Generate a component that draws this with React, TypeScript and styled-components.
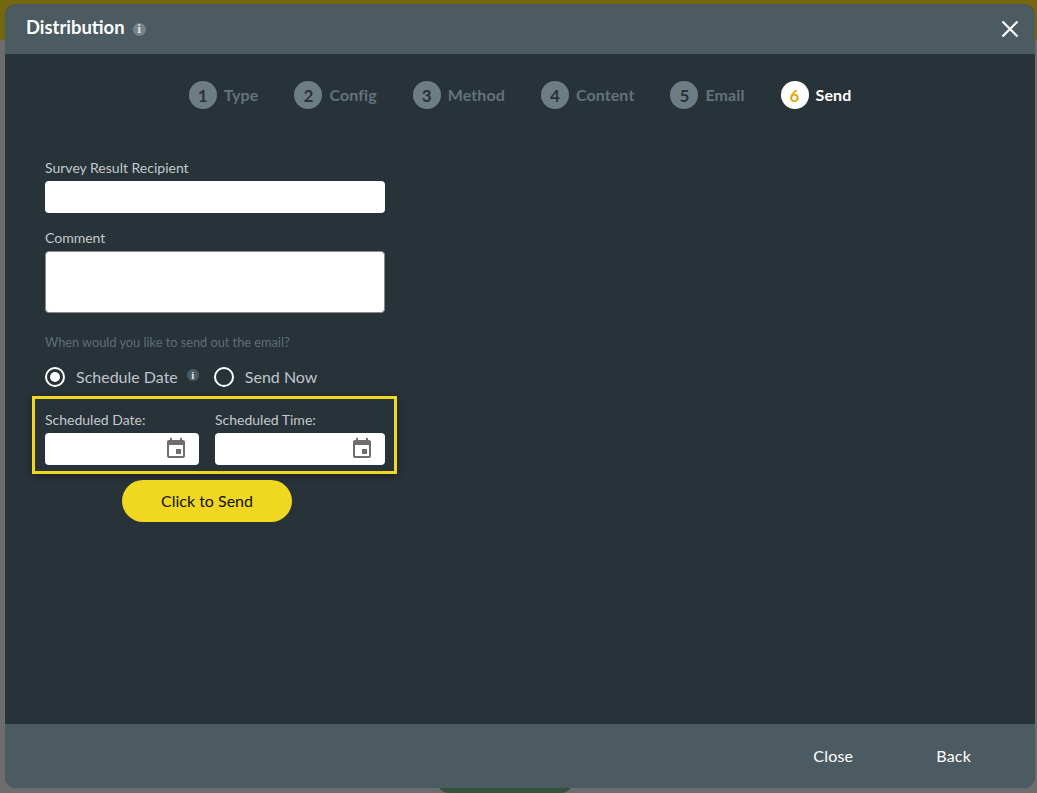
import { createGlobalStyle } from "styled-components";
import styled from "styled-components";

const steps = [
  { id: 1, name: "Type" },
  { id: 2, name: "Config" },
  { id: 3, name: "Method" },
  { id: 4, name: "Content" },
  { id: 5, name: "Email" },
  { id: 6, name: "Send", active: true },
];

const CalendarIcon = () => (
  <CalendarSvg viewBox="0 0 24 24" fill="currentColor">
    <path d="M17 12h-5v5h5v-5zM16 1v2H8V1H6v2H5c-1.11 0-1.99.9-1.99 2L3 19c0 1.1.89 2 2 2h14c1.1 0 2-.9 2-2V5c0-1.1-.9-2-2-2h-1V1h-2zm3 18H5V8h14v11z" />
  </CalendarSvg>
);

const App = () => {
  return (
    <Page>
      <GlobalStyle />
      <BackdropBar />
      <BackdropTab />
      <Modal>
        <Header>
          <Title>Distribution</Title>
          <HeaderInfo>i</HeaderInfo>
          <CloseIcon viewBox="0 0 18 18">
            <path d="M1.5 1.5 16.5 16.5M16.5 1.5 1.5 16.5" />
          </CloseIcon>
        </Header>
        <Body>
          <Steps>
            {steps.map((step) => (
              <Step key={step.id}>
                <StepNumber $active={step.active}>{step.id}</StepNumber>
                <StepName $active={step.active}>{step.name}</StepName>
              </Step>
            ))}
          </Steps>
          <Form>
            <Label>Survey Result Recipient</Label>
            <TextInput />
            <CommentLabel>Comment</CommentLabel>
            <CommentBox />
            <Question>When would you like to send out the email?</Question>
            <RadioRow>
              <RadioDot $checked />
              <RadioText>Schedule Date</RadioText>
              <RadioInfo>i</RadioInfo>
              <SendNowDot />
              <RadioText>Send Now</RadioText>
            </RadioRow>
            <Highlight>
              <DateField $width={154}>
                <Label>Scheduled Date:</Label>
                <DateInput>
                  <CalendarIcon />
                </DateInput>
              </DateField>
              <DateField $width={170}>
                <Label>Scheduled Time:</Label>
                <DateInput>
                  <CalendarIcon />
                </DateInput>
              </DateField>
            </Highlight>
            <SendButton>Click to Send</SendButton>
          </Form>
        </Body>
        <Footer>
          <FooterButton>Close</FooterButton>
          <FooterButton>Back</FooterButton>
        </Footer>
      </Modal>
    </Page>
  );
};

const GlobalStyle = createGlobalStyle`
  html, body {
    margin: 0;
    padding: 0;
    background: #6c6c6c;
    font-family: "Lato", "Liberation Sans", sans-serif;
  }
  * {
    box-sizing: border-box;
  }
`;

const Page = styled.div`
  position: relative;
  width: 1037px;
  height: 793px;
  padding: 4px 2px 5px 5px;
  overflow: hidden;
  background: #6c6c6c;
`;

const BackdropBar = styled.div`
  position: absolute;
  top: 0;
  left: 0;
  right: 0;
  height: 40px;
  background: #75670e;
`;

const BackdropTab = styled.div`
  position: absolute;
  left: 437px;
  bottom: 0;
  width: 136px;
  height: 12px;
  border-radius: 0 0 12px 12px / 0 0 12px 12px;
  background: #35523f;
`;

const Modal = styled.div`
  position: relative;
  display: flex;
  flex-direction: column;
  height: 100%;
  border-radius: 12px;
  overflow: hidden;
  background: #283239;
`;

const Header = styled.div`
  display: flex;
  align-items: center;
  height: 50px;
  flex-shrink: 0;
  padding: 0 16px 0 21px;
  background: #4c5b62;
`;

const Title = styled.div`
  position: relative;
  top: -2px;
  font-size: 18.4px;
  font-weight: 700;
  color: #fff;
`;

const HeaderInfo = styled.span`
  display: flex;
  align-items: center;
  justify-content: center;
  width: 13px;
  height: 13px;
  margin-left: 8px;
  border-radius: 50%;
  background: #76848a;
  color: #e4e8e9;
  font-family: "Liberation Serif", serif;
  font-size: 12px;
  font-weight: 700;
`;

const CloseIcon = styled.svg`
  width: 18px;
  height: 18px;
  margin-left: auto;
  fill: none;
  stroke: #fff;
  stroke-width: 2.2;
`;

const Body = styled.div`
  flex: 1;
  padding: 0 0 0 40px;
`;

const Steps = styled.div`
  display: flex;
  justify-content: center;
  gap: 36px;
  padding: 27px 40px 0 0;
`;

const Step = styled.div`
  display: flex;
  align-items: center;
  gap: 7px;
  height: 28px;
`;

const StepNumber = styled.span<{ $active?: boolean }>`
  display: flex;
  align-items: center;
  justify-content: center;
  width: 28px;
  height: 28px;
  border-radius: 50%;
  font-size: 17px;
  font-weight: 700;
  background: ${({ $active }) => ($active ? "#fff" : "#6d7d84")};
  color: ${({ $active }) => ($active ? "#deaa0c" : "#283239")};
`;

const StepName = styled.span<{ $active?: boolean }>`
  padding-bottom: 2px;
  font-size: 16px;
  font-weight: 700;
  letter-spacing: 0.1px;
  color: ${({ $active }) => ($active ? "#fff" : "#647379")};
`;

const Form = styled.div`
  display: flex;
  flex-direction: column;
  align-items: flex-start;
  width: 340px;
  padding-top: 50px;
`;

const Label = styled.label`
  display: block;
  height: 18px;
  margin-bottom: 4px;
  font-size: 14px;
  line-height: 18px;
  color: #c3c9cb;
`;

const TextInput = styled.div`
  width: 340px;
  height: 32px;
  border-radius: 4px;
  background: #fff;
`;

const CommentLabel = styled(Label)`
  margin-top: 16px;
`;

const CommentBox = styled.div`
  width: 340px;
  height: 62px;
  border: 1px solid #8a8a8a;
  border-radius: 4px;
  background: #fff;
`;

const Question = styled.div`
  margin-top: 21px;
  height: 16px;
  font-size: 12.75px;
  line-height: 16px;
  color: #5f6e75;
`;

const RadioRow = styled.div`
  display: flex;
  align-items: center;
  height: 20px;
  margin-top: 17px;
`;

const RadioDot = styled.span<{ $checked?: boolean }>`
  position: relative;
  width: 20px;
  height: 20px;
  margin-right: 11px;
  border: 2px solid #fff;
  border-radius: 50%;

  &::after {
    content: "";
    display: ${({ $checked }) => ($checked ? "block" : "none")};
    position: absolute;
    inset: 3px;
    border-radius: 50%;
    background: #fff;
  }
`;

const SendNowDot = styled(RadioDot)`
  margin-left: 15px;
`;

const RadioText = styled.span`
  padding-bottom: 2px;
  font-size: 16px;
  color: #bfc5c8;
`;

const RadioInfo = styled.span`
  display: flex;
  align-items: center;
  justify-content: center;
  width: 12px;
  height: 12px;
  margin: -4px 0 0 9px;
  border-radius: 50%;
  background: #4c5b62;
  color: #dfe3e4;
  font-family: "Liberation Serif", serif;
  font-size: 11px;
  font-weight: 700;
`;

const Highlight = styled.div`
  display: flex;
  gap: 16px;
  width: 365px;
  height: 78px;
  margin: 9px 0 0 -13px;
  padding: 12px 9px 0 10px;
  border: 3px solid #f0d820;
  box-shadow: 0 2px 8px rgba(0, 0, 0, 0.35);
`;

const DateField = styled.div<{ $width: number }>`
  width: ${({ $width }) => $width}px;
  flex-shrink: 0;
`;

const DateInput = styled.div`
  display: flex;
  align-items: center;
  justify-content: flex-end;
  height: 32px;
  padding-right: 11px;
  border-radius: 4px;
  background: #fff;
`;

const CalendarSvg = styled.svg`
  width: 24px;
  height: 24px;
  color: #6e6e6e;
`;

const SendButton = styled.button`
  width: 170px;
  height: 42px;
  margin: 6px 0 0 77px;
  padding: 0 0 2px;
  border: none;
  border-radius: 21px;
  background: #f0d820;
  color: #111;
  font-family: "Lato", sans-serif;
  font-size: 16px;
`;

const Footer = styled.div`
  display: flex;
  align-items: center;
  justify-content: flex-end;
  gap: 83px;
  height: 64px;
  flex-shrink: 0;
  padding: 0 64px 0 0;
  background: #4c5b62;
`;

const FooterButton = styled.span`
  padding-bottom: 2px;
  font-size: 16px;
  font-weight: 400;
  letter-spacing: 0.2px;
  color: #fff;
`;

export default App;
